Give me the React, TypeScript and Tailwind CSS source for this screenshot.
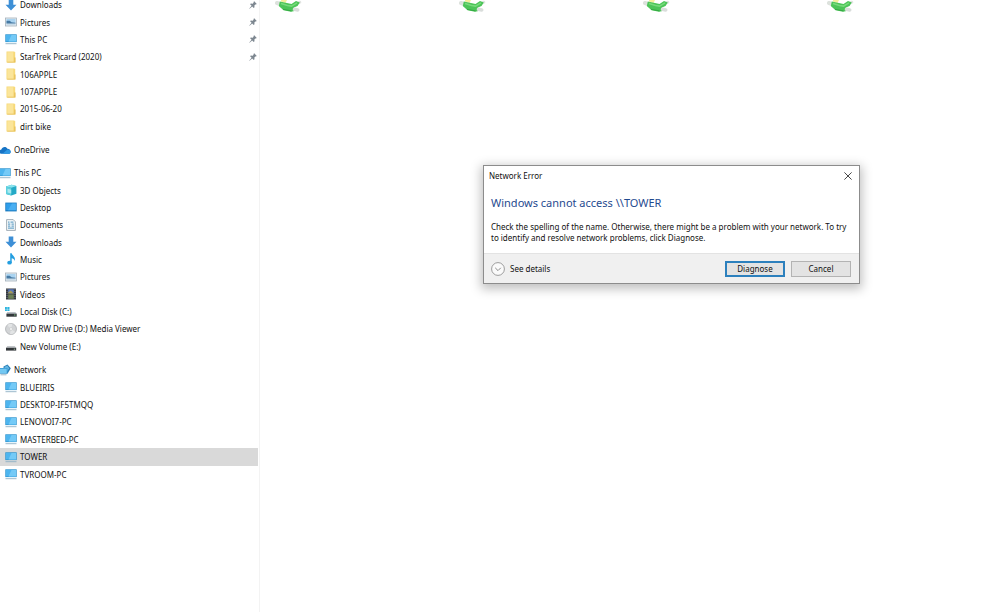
import type { ReactNode } from "react";

type IconName =
  | "download"
  | "pictures"
  | "pc"
  | "folder"
  | "cloud"
  | "cube"
  | "desktop"
  | "document"
  | "music"
  | "video"
  | "localDisk"
  | "dvd"
  | "drive"
  | "network";

interface NavItem {
  label: string;
  icon: IconName;
  pinned?: boolean;
  root?: boolean;
  selected?: boolean;
}

const quickAccess: NavItem[] = [
  { label: "Downloads", icon: "download", pinned: true },
  { label: "Pictures", icon: "pictures", pinned: true },
  { label: "This PC", icon: "pc", pinned: true },
  { label: "StarTrek Picard (2020)", icon: "folder", pinned: true },
  { label: "106APPLE", icon: "folder" },
  { label: "107APPLE", icon: "folder" },
  { label: "2015-06-20", icon: "folder" },
  { label: "dirt bike", icon: "folder" },
];

const oneDrive: NavItem[] = [{ label: "OneDrive", icon: "cloud", root: true }];

const thisPc: NavItem[] = [
  { label: "This PC", icon: "pc", root: true },
  { label: "3D Objects", icon: "cube" },
  { label: "Desktop", icon: "desktop" },
  { label: "Documents", icon: "document" },
  { label: "Downloads", icon: "download" },
  { label: "Music", icon: "music" },
  { label: "Pictures", icon: "pictures" },
  { label: "Videos", icon: "video" },
  { label: "Local Disk (C:)", icon: "localDisk" },
  { label: "DVD RW Drive (D:) Media Viewer", icon: "dvd" },
  { label: "New Volume (E:)", icon: "drive" },
];

const network: NavItem[] = [
  { label: "Network", icon: "network", root: true },
  { label: "BLUEIRIS", icon: "pc" },
  { label: "DESKTOP-IF5TMQQ", icon: "pc" },
  { label: "LENOVOI7-PC", icon: "pc" },
  { label: "MASTERBED-PC", icon: "pc" },
  { label: "TOWER", icon: "pc", selected: true },
  { label: "TVROOM-PC", icon: "pc" },
];

const icons: Record<IconName, ReactNode> = {
  download: <path d="M3.7 0.5h4.6v5.2h3.2L6 11.5 0.5 5.7h3.2z" fill="#3d8fd6" />,
  pictures: (
    <>
      <rect x="0.5" y="2" width="11" height="8" fill="#e4eef5" stroke="#a3b0ba" strokeWidth="0.8" />
      <path d="M1.5 3h9v4h-9z" fill="#a9d3f0" />
      <path d="M1.5 4.8h3.2l1.8 1.5 4 .4v1h-9z" fill="#4679a3" />
      <path d="M1.5 7.7h9V9h-9z" fill="#c8dcea" />
    </>
  ),
  pc: (
    <>
      <rect x="0.3" y="1.3" width="11.4" height="7.8" fill="#2b93cf" />
      <path d="M1 2h10v6.4H1z" fill="#4db5ef" />
      <path d="M6.5 2H11v6.4H3.5z" fill="#74caf7" />
      <path d="M0.5 10.7h11" stroke="#8fb0c4" strokeWidth="0.9" />
    </>
  ),
  folder: (
    <>
      <path d="M1.5 0.5h7.8l.9 1v10H1.5z" fill="#f7d978" />
      <path d="M2.3 1.2h6v10h-6z" fill="#fbe59a" />
      <path d="M9.3 6.5h1.2v5H2.2v-.7h7.1z" fill="#e6bd55" />
    </>
  ),
  cloud: (
    <>
      <path d="M3 9.8C-.4 9.8-.5 6 2.4 5.6 3 2.4 7.3 2 8.4 4.7c3.8-.1 4.6 5.1 1 5.1z" fill="#1673c5" />
      <path d="M3.5 9.8 8.4 5.6c4-.3 4.3 4.2 1 4.2z" fill="#2f98e4" />
    </>
  ),
  cube: (
    <>
      <path d="M1 2.4 6.6.7 11.4 2v7.7l-5 1.9L1 10z" fill="#24a9c6" />
      <path d="M1 2.4 6.6.7 11.4 2 6.2 3.8z" fill="#8be4ee" />
      <path d="m1 2.4 5.2 1.4v7.8L1 10z" fill="#5ed0de" />
      <path d="m2.5 4.8 3.7 1v3.8l-3.7-1z" fill="#a9e9f0" />
    </>
  ),
  desktop: (
    <>
      <rect x="0.3" y="1.6" width="11.4" height="8.8" fill="#1878bd" />
      <path d="M1.1 2.4h9.8v6.8H1.1z" fill="#2f9eea" />
      <path d="m7 2.4 3.9 0v6.8H3z" fill="#4aaff2" />
    </>
  ),
  document: (
    <>
      <path d="M1.6.6h6.6l2.2 2.2v8.6H1.6z" fill="#f5f9fb" stroke="#8b9ba6" strokeWidth="0.8" />
      <path d="M3 3.1h1.5M5.5 3.1h3M3 5.1h2.3M6.5 5.1h2.4M3 7.1h2.3M6.5 7.1h2.4M3 9.1h6" stroke="#4c91bd" strokeWidth="1" />
    </>
  ),
  music: (
    <>
      <path d="M5.2.3h1.5c.3 2.3 4.6 3.2 2.8 7.8C9.5 6 8 5.2 6.7 5.2V10H5.2z" fill="#239ee0" />
      <ellipse cx="4.5" cy="9.7" rx="2.3" ry="1.9" fill="#239ee0" />
    </>
  ),
  video: (
    <>
      <rect x="1" y="0.5" width="10" height="11" fill="#34383f" />
      <path d="M3.2 1.2h5.6v4.3H3.2z" fill="#5b78b8" />
      <path d="M3.2 6.4h5.6v4.4H3.2z" fill="#6d8057" />
      <path d="m3.2 4.6 2.5-2 3.1 2.9H3.2z" fill="#a69a54" />
      <path d="M2 1v10M10 1v10" stroke="#9298a0" strokeWidth="0.7" strokeDasharray="1 1" />
    </>
  ),
  localDisk: (
    <>
      <path d="M0 1h1.9v1.9H0zM2.3 1h2.2v1.9H2.3zM0 3.3h1.9v1.8H0zM2.3 3.3h2.2v1.8H2.3z" fill="#2bb4df" />
      <path d="M2.2 6h8.2l1.3 2H1.4z" fill="#bcc2c7" />
      <path d="M1.4 7.7h10.3v3H1.4z" fill="#33383c" />
      <path d="M9 9h1.5" stroke="#8edb8e" strokeWidth="0.8" />
    </>
  ),
  dvd: (
    <>
      <circle cx="6" cy="6" r="5.5" fill="#d2d4d6" stroke="#a6a9ac" strokeWidth="0.7" />
      <path d="M6 6 2.3 2.2A5.2 5.2 0 0 1 7.4 1zM6 6l4.2 3A5.2 5.2 0 0 1 5 11z" fill="#e2e4e5" />
      <circle cx="6" cy="6" r="1.5" fill="#f3f3f3" stroke="#bcbfc1" strokeWidth="0.5" />
    </>
  ),
  drive: (
    <>
      <path d="M2.3 6h7.4l1.6 2H.9z" fill="#c2c6c9" />
      <path d="M1 7.8h10.2v2.8H1z" fill="#33373a" />
      <path d="M8.8 9.2h1.3" stroke="#b9d9b9" strokeWidth="0.8" />
    </>
  ),
  network: (
    <>
      <path d="m4.5 2.5 4-2 3.3 3.7-3.1 5.3-4-1z" fill="#2a7eb5" />
      <path d="m5.3 3 3-1.5 1.9 2.8-2.2 3.2z" fill="#65b7e4" />
      <rect x="0" y="4" width="8.5" height="5.7" fill="#3699d4" />
      <path d="M.7 4.7h7v4.2h-7z" fill="#73c8f2" />
      <path d="M1.5 10.8h6" stroke="#8daec0" strokeWidth="0.9" />
    </>
  ),
};

function PinIcon() {
  return (
    <svg viewBox="0 0 8 8" className="size-2 shrink-0" aria-hidden="true">
      <path d="M5.2.2 7.8 2.9l-.9.6-.6-.1-.9 1 .1 1.9-.8.6-1.5-1.5L.6 7.7l-.3-.3 2.3-2.6L1.1 3.3l.7-.7 1.9.1.9-1-.1-.8z" fill="#7d8790" />
    </svg>
  );
}

function NavRow({ item }: { item: NavItem }) {
  return (
    <li className="flex">
      <a
        href="#"
        aria-current={item.selected ? "page" : undefined}
        className={`flex flex-1 items-center gap-[3px] pr-px ${item.root ? "" : "pl-[5px]"} ${
          item.selected ? "bg-[#d9d9d9]" : ""
        }`}
      >
        <svg viewBox="0 0 12 12" className={`size-3 shrink-0 ${item.root ? "-ml-px" : ""}`} aria-hidden="true">
          {icons[item.icon]}
        </svg>
        <span className="flex-1 whitespace-nowrap">{item.label}</span>
        {item.pinned && <PinIcon />}
      </a>
    </li>
  );
}

function NavGroup({ items, className }: { items: NavItem[]; className: string }) {
  return (
    <ul className={`grid auto-rows-fr ${className}`}>
      {items.map((item) => (
        <NavRow key={item.label} item={item} />
      ))}
    </ul>
  );
}

// Network share: green pipe with a grey connector at each end
function ShareIcon() {
  return (
    <svg viewBox="0 0 28 14" className="h-[14px] w-7" aria-hidden="true">
      <path d="M6 0h6l-1.500 3L6 1.500z" fill="#f4ee9c" />
      <path d="m2 3 3 1" stroke="#dde2dd" strokeWidth="4" strokeLinecap="round" />
      <path d="m24 2.500.8-.3" stroke="#e2e5e2" strokeWidth="3" strokeLinecap="round" />
      <path d="m4.800 1.500 7.200 1.500 4.500 1L21 1l3.800 1.500L22.500 6 19 7.500l.5 3.500-3.500.8-7.500-1.600L3.800 6z" fill="#4cc458" />
      <path d="m6 3.500 6.500 2 4 .6L22 2.800" stroke="#76da7b" strokeWidth="1.500" fill="none" />
      <path d="m8 9.300 8.500 1.600" stroke="#2fa23d" strokeWidth="0.800" />
      <path d="m19.500 9.300 3.200.6" stroke="#d9dddb" strokeWidth="3.600" strokeLinecap="round" />
    </svg>
  );
}

function ErrorDialog() {
  return (
    <div
      role="dialog"
      aria-labelledby="dialog-title"
      className="absolute top-[165px] left-[483px] w-[377px] border border-[#8c8c8c] bg-white shadow-[0_3px_10px_2px_rgba(0,0,0,0.25)]"
    >
      <div className="flex h-5 items-center justify-between pr-[6px] pl-[5px]">
        <h1 id="dialog-title">Network Error</h1>
        <button type="button" aria-label="Close" className="p-px">
          <svg viewBox="0 0 8 8" className="size-2" aria-hidden="true">
            <path d="m.4.4 7.2 7.2M7.6.4.4 7.6" stroke="#333" strokeWidth="0.9" />
          </svg>
        </button>
      </div>
      <div className="px-[7px] pt-[9px] pb-[10px]">
        <h2 className="text-[11px] leading-4 text-[#1f4a8f]">Windows cannot access \\TOWER</h2>
        <p className="mt-[10px] leading-[11px]">
          Check the spelling of the name. Otherwise, there might be a problem with your network. To try
          <br />
          to identify and resolve network problems, click Diagnose.
        </p>
      </div>
      <div className="flex h-[30px] items-center gap-[6px] border-t border-[#e3e3e3] bg-[#f0f0f0] pr-2 pl-[7px]">
        <button type="button" className="mr-auto flex items-center gap-[5px]">
          <svg viewBox="0 0 14 14" className="size-[14px]" aria-hidden="true">
            <circle cx="7" cy="7" r="6.4" fill="#fafafa" stroke="#929292" strokeWidth="0.9" />
            <path d="m4.2 5.8 2.8 2.8 2.8-2.8" fill="none" stroke="#808080" strokeWidth="0.9" />
          </svg>
          See details
        </button>
        <button type="button" className="h-4 w-15 border-2 border-[#2c80bd] bg-[#e3e3e3] leading-3">
          Diagnose
        </button>
        <button type="button" className="h-4 w-15 border border-[#b3b3b3] bg-[#e3e3e3] leading-3">
          Cancel
        </button>
      </div>
    </div>
  );
}

export default function App() {
  return (
    <div className="relative flex h-screen overflow-hidden bg-white font-['Noto_Sans','Open_Sans',sans-serif] text-[8px] leading-3 text-[#111]">
      <nav
        aria-label="Folders"
        className="-mt-1 flex w-[260px] shrink-0 flex-col gap-[6px] border-r border-[#f3f3f3] pr-px leading-[9px]"
      >
        <NavGroup items={quickAccess} className="h-[139px]" />
        <NavGroup items={oneDrive} className="h-[17px]" />
        <NavGroup items={thisPc} className="h-[191px]" />
        <NavGroup items={network} className="h-[122px]" />
      </nav>
      <main className="flex flex-1 gap-[156px] pl-[15px]">
        {["share-1", "share-2", "share-3", "share-4"].map((id) => (
          <ShareIcon key={id} />
        ))}
      </main>
      <ErrorDialog />
    </div>
  );
}
